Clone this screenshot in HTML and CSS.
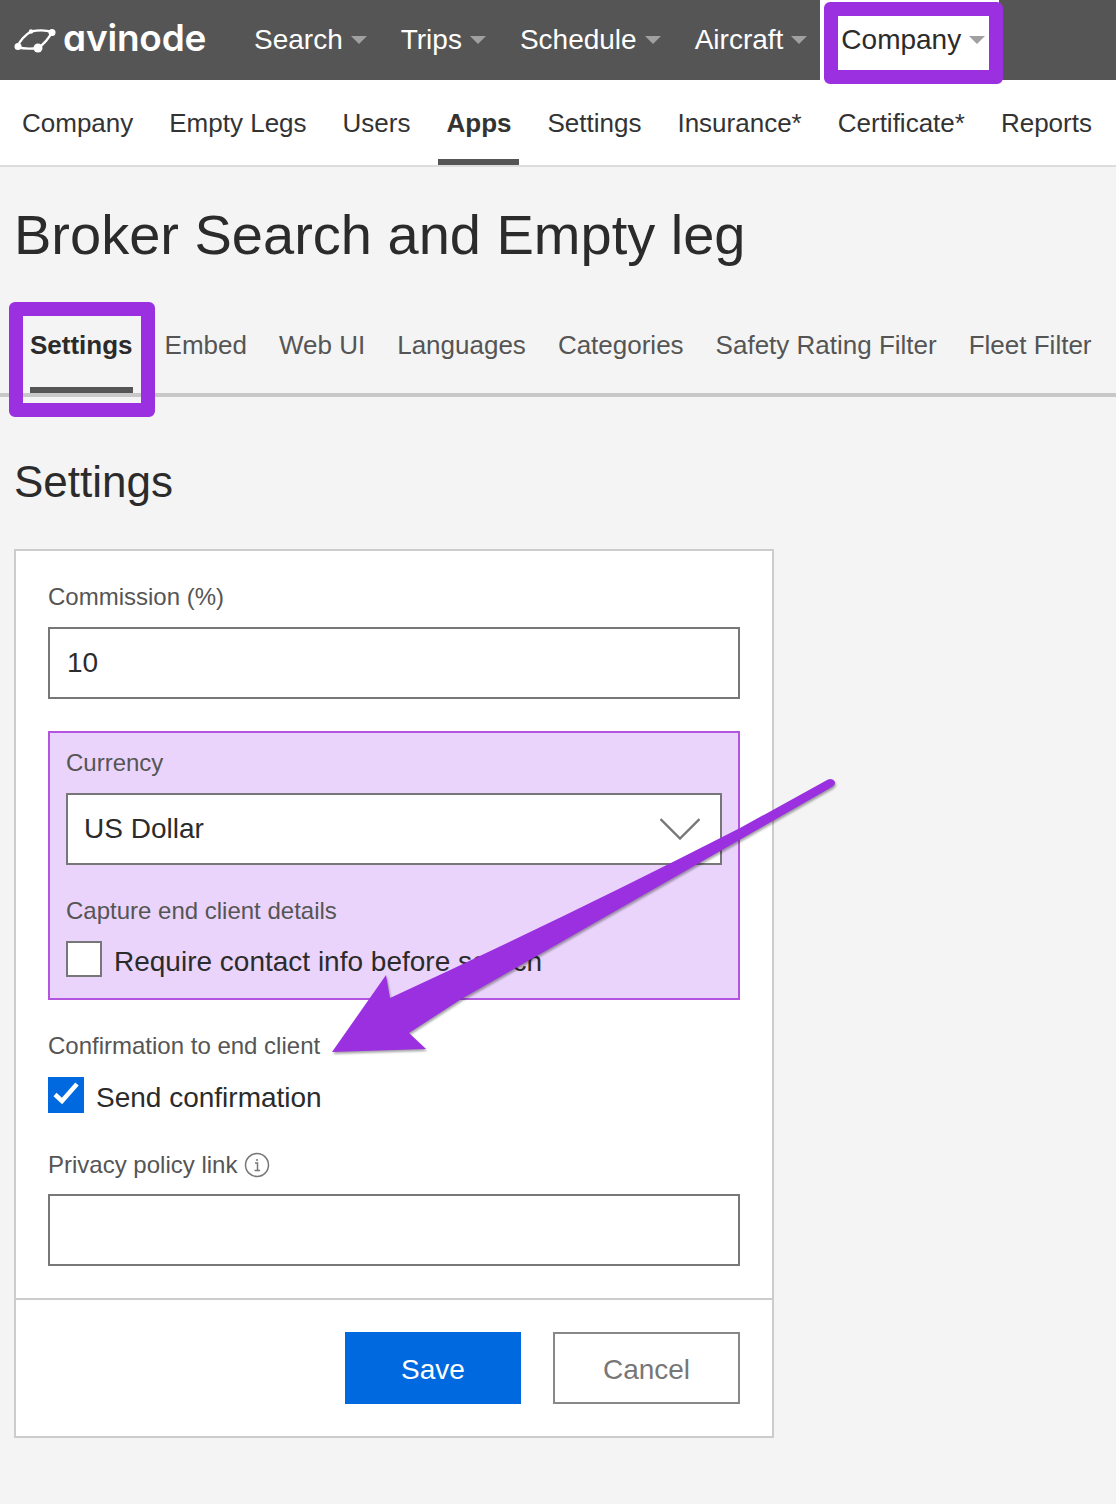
FILE: index.html
```html
<!DOCTYPE html>
<html lang="en">
<head>
    <meta charset="UTF-8">
    <title>Broker Search and Empty leg</title>
    <link rel="stylesheet" href="styles.css">
</head>
<body>
<div class="topbar">
    <div class="logo">
        <svg class="logo-mark" width="42" height="26" viewBox="0 0 42 26">
            <path d="M3 20C6 14 11 8 17 4.5C24 3 32 3 38 5C35 11 30 17 24 21C17 22 10 22 3 20Z" fill="none" stroke="#fff" stroke-width="2.4"/>
            <circle cx="4" cy="19.5" r="3.5" fill="#fff"/>
            <circle cx="24" cy="21" r="4.5" fill="#fff"/>
            <circle cx="38" cy="5.5" r="3.5" fill="#fff"/>
            <circle cx="17" cy="4.5" r="2.2" fill="#fff"/>
        </svg>
        <span class="logo-text">avinode</span>
    </div>
    <ul class="mainnav">
        <li>Search<i class="caret"></i></li>
        <li>Trips<i class="caret"></i></li>
        <li>Schedule<i class="caret"></i></li>
        <li>Aircraft<i class="caret"></i></li>
        <li class="current">Company<i class="caret"></i></li>
    </ul>
</div>

<ul class="subnav">
    <li>Company</li>
    <li>Empty Legs</li>
    <li>Users</li>
    <li class="current">Apps</li>
    <li>Settings</li>
    <li>Insurance*</li>
    <li>Certificate*</li>
    <li>Reports</li>
</ul>

<h1>Broker Search and Empty leg</h1>

<ul class="tabs">
    <li class="current">Settings</li>
    <li>Embed</li>
    <li>Web UI</li>
    <li>Languages</li>
    <li>Categories</li>
    <li>Safety Rating Filter</li>
    <li>Fleet Filter</li>
</ul>

<h2>Settings</h2>

<div class="card">
    <div class="card-body">
        <div class="label">Commission (%)</div>
        <div class="input">10</div>

        <div class="marked">
            <div class="label">Currency</div>
            <div class="input select">
                US Dollar
                <svg width="40" height="22" viewBox="0 0 40 22"><path d="M0.5 1L20 20.5L39.5 1" fill="none" stroke="#777" stroke-width="2.4"/></svg>
            </div>
            <div class="label gap-top">Capture end client details</div>
            <div class="check-row">
                <span class="checkbox"></span>
                <span class="check-text">Require contact info before search</span>
            </div>
        </div>

        <div class="label gap-top">Confirmation to end client</div>
        <div class="check-row check-send">
            <span class="checkbox checked">
                <svg width="36" height="36" viewBox="0 0 36 36"><path d="M7 17.5L14 24L29 7" fill="none" stroke="#fff" stroke-width="4.5"/></svg>
            </span>
            <span class="check-text">Send confirmation</span>
        </div>

        <div class="label privacy">
            Privacy policy link
            <svg width="26" height="26" viewBox="0 0 26 26">
                <circle cx="13" cy="13" r="11.5" fill="none" stroke="#777" stroke-width="1.5"/>
                <path d="M11 11H13.5V18.5M10.5 18.5H16M13 7V9" fill="none" stroke="#777" stroke-width="1.5"/>
            </svg>
        </div>
        <div class="input"></div>
    </div>
    <div class="card-foot">
        <div class="btn btn-save">Save</div>
        <div class="btn btn-cancel">Cancel</div>
    </div>
</div>

<!-- annotations on top of the screenshot -->
<div class="mark-box mark-company"></div>
<div class="mark-box mark-settings"></div>
<svg class="arrow" width="520" height="300" viewBox="0 -5 520 300">
    <path d="M498 -0.5Q503 -2 505 2Q505.5 5 502 7L133 218L79 253L96 269L2 272L56 195L60 218Q240 135 410 48Z" fill="#9b30e0"/>
</svg>
</body>
</html>
```

FILE: styles.css
```css
* {
    margin: 0;
    padding: 0;
    box-sizing: border-box;
}

body {
    background-color: #f4f4f4;
    font-family: "Liberation Sans", Arial, sans-serif;
    color: #2b2b2b;
    position: relative;
    height: 1504px;
    overflow: hidden;
}

ul {
    list-style: none;
}

.topbar {
    display: flex;
    height: 80px;
    background-color: #555555;
}

.logo {
    display: flex;
    align-items: center;
    width: 237px;
    padding-left: 14px;
}

.logo-text {
    margin-left: 7px;
    padding-bottom: 6px;
    font-family: Inter, sans-serif;
    font-size: 37px;
    font-weight: 600;
    font-feature-settings: "cv11";
    letter-spacing: -0.2px;
    color: #fff;
}

.mainnav {
    display: flex;
}

.mainnav li {
    display: flex;
    align-items: center;
    padding: 0 17px;
    font-size: 28px;
    color: #fff;
}

.mainnav .current {
    margin-left: -4px;
    padding: 0 14px 0 21px;
    background-color: #fff;
    color: #2b2b2b;
}

.caret {
    width: 0;
    height: 0;
    margin-left: 8px;
    border-left: 8px solid transparent;
    border-right: 8px solid transparent;
    border-top: 8px solid #a0a0a0;
}

.subnav {
    display: flex;
    gap: 18px;
    height: 87px;
    padding-left: 13px;
    background-color: #fff;
    border-bottom: 2px solid #dddddd;
}

.subnav li {
    padding: 0 9px;
    font-size: 26px;
    line-height: 87px;
    color: #333;
}

.subnav .current {
    margin: 0 1px;
    padding: 0 8px;
    font-weight: bold;
    border-bottom: 6px solid #555555;
}

h1 {
    margin: 36px 0 0 14px;
    font-size: 56px;
    font-weight: normal;
    line-height: 64px;
}

.tabs {
    display: flex;
    gap: 32px;
    height: 97px;
    margin-top: 33px;
    padding-left: 30px;
    border-bottom: 4px solid #c8c8c8;
}

.tabs li {
    font-size: 26px;
    line-height: 90px;
    height: 93px;
    color: #555;
}

.tabs .current {
    font-weight: bold;
    color: #2b2b2b;
    border-bottom: 6px solid #555555;
}

h2 {
    margin: 60px 0 42px 14px;
    font-size: 44px;
    font-weight: normal;
    line-height: 50px;
}

.card {
    width: 760px;
    margin-left: 14px;
    background-color: #fff;
    border: 2px solid #cccccc;
}

.card-body {
    padding: 30px 32px 32px;
    border-bottom: 2px solid #cccccc;
}

.label {
    font-size: 24px;
    line-height: 32px;
    color: #555;
}

.input {
    display: flex;
    align-items: center;
    height: 72px;
    margin-top: 14px;
    padding: 0 17px;
    background-color: #fff;
    border: 2px solid #777777;
    font-size: 28px;
}

.select {
    justify-content: space-between;
    padding-left: 16px;
}

.select svg {
    margin-right: 3px;
}

.marked {
    margin-top: 32px;
    padding: 14px 16px 21px;
    background-color: #ead4fb;
    border: 2px solid #b455e0;
}

.gap-top {
    margin-top: 30px;
}

.check-row {
    display: flex;
    align-items: center;
    gap: 12px;
    height: 36px;
    margin-top: 14px;
    font-size: 28px;
}

.check-send {
    margin-top: 15px;
}

.check-text {
    padding-top: 5px;
}

.checkbox {
    width: 36px;
    height: 36px;
    background-color: #fff;
    border: 2px solid #777777;
}

.checked {
    background-color: #0069e0;
    border: 0;
}

.checked svg {
    display: block;
}

.privacy {
    display: flex;
    align-items: center;
    gap: 7px;
    margin-top: 36px;
}

.privacy + .input {
    margin-top: 13px;
}

.card-foot {
    display: flex;
    justify-content: flex-end;
    gap: 32px;
    padding: 32px;
}

.btn {
    height: 72px;
    font-size: 28px;
    line-height: 76px;
    text-align: center;
}

.btn-save {
    width: 176px;
    background-color: #0069e0;
    color: #fff;
}

.btn-cancel {
    width: 187px;
    line-height: 72px;
    background-color: #fff;
    border: 2px solid #888888;
    color: #777;
}

.mark-box {
    position: absolute;
    border: 14px solid #9b30e0;
    border-radius: 6px;
}

.mark-company {
    left: 824px;
    top: 2px;
    width: 179px;
    height: 82px;
}

.mark-settings {
    left: 9px;
    top: 302px;
    width: 146px;
    height: 115px;
}

.arrow {
    position: absolute;
    left: 330px;
    top: 775px;
    filter: drop-shadow(1px 2px 1px rgba(0, 0, 0, 0.35));
}
```
